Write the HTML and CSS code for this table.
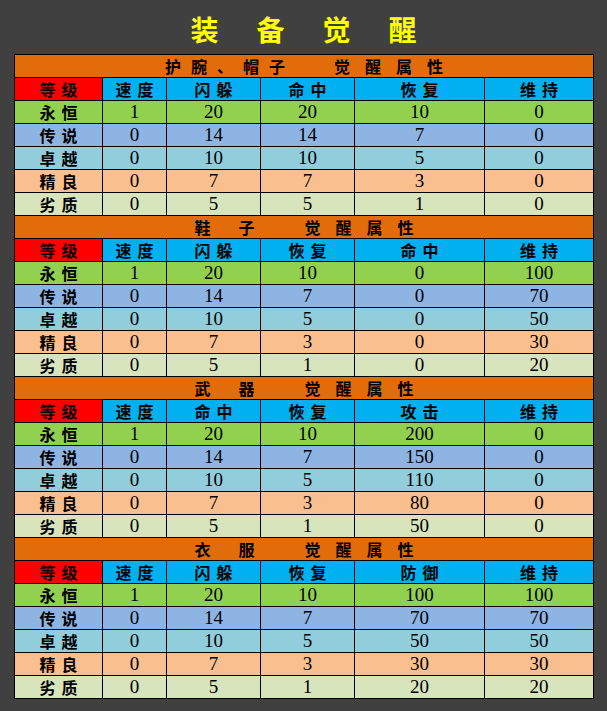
FILE: index.html
```html
<!DOCTYPE html>
<html lang="zh">
<head>
<meta charset="utf-8">
<title>装备觉醒</title>
<link rel="stylesheet" href="styles.css">
</head>
<body>
<h1 class="title">装备觉醒</h1>
<div class="grid">
  <div class="sec"><span class="p1 narrow">护腕、帽子</span><span class="p2 p2n">觉醒属性</span></div>
  <div class="c hd red cn">等级</div><div class="c hd blue cn">速度</div><div class="c hd blue cn">闪躲</div><div class="c hd blue cn">命中</div><div class="c hd blue cn">恢复</div><div class="c hd blue cn">维持</div>
  <div class="c r1 cn">永恒</div><div class="c r1">1</div><div class="c r1">20</div><div class="c r1">20</div><div class="c r1">10</div><div class="c r1">0</div>
  <div class="c r2 cn">传说</div><div class="c r2">0</div><div class="c r2">14</div><div class="c r2">14</div><div class="c r2">7</div><div class="c r2">0</div>
  <div class="c r3 cn">卓越</div><div class="c r3">0</div><div class="c r3">10</div><div class="c r3">10</div><div class="c r3">5</div><div class="c r3">0</div>
  <div class="c r4 cn">精良</div><div class="c r4">0</div><div class="c r4">7</div><div class="c r4">7</div><div class="c r4">3</div><div class="c r4">0</div>
  <div class="c r5 cn">劣质</div><div class="c r5">0</div><div class="c r5">5</div><div class="c r5">5</div><div class="c r5">1</div><div class="c r5">0</div>

  <div class="sec"><span class="p1 wide">鞋子</span><span class="p2">觉醒属性</span></div>
  <div class="c hd red cn">等级</div><div class="c hd blue cn">速度</div><div class="c hd blue cn">闪躲</div><div class="c hd blue cn">恢复</div><div class="c hd blue cn">命中</div><div class="c hd blue cn">维持</div>
  <div class="c r1 cn">永恒</div><div class="c r1">1</div><div class="c r1">20</div><div class="c r1">10</div><div class="c r1">0</div><div class="c r1">100</div>
  <div class="c r2 cn">传说</div><div class="c r2">0</div><div class="c r2">14</div><div class="c r2">7</div><div class="c r2">0</div><div class="c r2">70</div>
  <div class="c r3 cn">卓越</div><div class="c r3">0</div><div class="c r3">10</div><div class="c r3">5</div><div class="c r3">0</div><div class="c r3">50</div>
  <div class="c r4 cn">精良</div><div class="c r4">0</div><div class="c r4">7</div><div class="c r4">3</div><div class="c r4">0</div><div class="c r4">30</div>
  <div class="c r5 cn">劣质</div><div class="c r5">0</div><div class="c r5">5</div><div class="c r5">1</div><div class="c r5">0</div><div class="c r5">20</div>

  <div class="sec"><span class="p1 wide">武器</span><span class="p2">觉醒属性</span></div>
  <div class="c hd red cn">等级</div><div class="c hd blue cn">速度</div><div class="c hd blue cn">命中</div><div class="c hd blue cn">恢复</div><div class="c hd blue cn">攻击</div><div class="c hd blue cn">维持</div>
  <div class="c r1 cn">永恒</div><div class="c r1">1</div><div class="c r1">20</div><div class="c r1">10</div><div class="c r1">200</div><div class="c r1">0</div>
  <div class="c r2 cn">传说</div><div class="c r2">0</div><div class="c r2">14</div><div class="c r2">7</div><div class="c r2">150</div><div class="c r2">0</div>
  <div class="c r3 cn">卓越</div><div class="c r3">0</div><div class="c r3">10</div><div class="c r3">5</div><div class="c r3">110</div><div class="c r3">0</div>
  <div class="c r4 cn">精良</div><div class="c r4">0</div><div class="c r4">7</div><div class="c r4">3</div><div class="c r4">80</div><div class="c r4">0</div>
  <div class="c r5 cn">劣质</div><div class="c r5">0</div><div class="c r5">5</div><div class="c r5">1</div><div class="c r5">50</div><div class="c r5">0</div>

  <div class="sec"><span class="p1 wide">衣服</span><span class="p2">觉醒属性</span></div>
  <div class="c hd red cn">等级</div><div class="c hd blue cn">速度</div><div class="c hd blue cn">闪躲</div><div class="c hd blue cn">恢复</div><div class="c hd blue cn">防御</div><div class="c hd blue cn">维持</div>
  <div class="c r1 cn">永恒</div><div class="c r1">1</div><div class="c r1">20</div><div class="c r1">10</div><div class="c r1">100</div><div class="c r1">100</div>
  <div class="c r2 cn">传说</div><div class="c r2">0</div><div class="c r2">14</div><div class="c r2">7</div><div class="c r2">70</div><div class="c r2">70</div>
  <div class="c r3 cn">卓越</div><div class="c r3">0</div><div class="c r3">10</div><div class="c r3">5</div><div class="c r3">50</div><div class="c r3">50</div>
  <div class="c r4 cn">精良</div><div class="c r4">0</div><div class="c r4">7</div><div class="c r4">3</div><div class="c r4">30</div><div class="c r4">30</div>
  <div class="c r5 cn">劣质</div><div class="c r5">0</div><div class="c r5">5</div><div class="c r5">1</div><div class="c r5">20</div><div class="c r5">20</div>
</div>
</body>
</html>
```

FILE: styles.css
```css
html, body {
  margin: 0;
  padding: 0;
  background: #404040;
}
body {
  width: 607px;
  height: 711px;
  overflow: hidden;
}
.title {
  margin: 0;
  height: 54px;
  box-sizing: border-box;
  padding: 12px 0 0 38px;
  text-align: center;
  font-family: "Noto Sans CJK SC", sans-serif;
  font-size: 28px;
  font-weight: 700;
  line-height: 34px;
  letter-spacing: 38px;
  color: #ffff00;
}
.grid {
  margin-left: 14px;
  width: 580px;
  box-sizing: border-box;
  padding: 1px;
  background: #000;
  display: grid;
  grid-template-columns: 87px 63px 93px 93px 129px 108px;
  grid-auto-rows: 22px;
  gap: 1px;
}
.sec {
  grid-column: 1 / -1;
  background: #e26b0a;
  display: flex;
  justify-content: center;
  align-items: center;
  font-family: "Noto Sans CJK SC", sans-serif;
  font-size: 16px;
  font-weight: 700;
  color: #000;
  line-height: 22px;
}
.p1.narrow { letter-spacing: 10px; }
.p1.wide { letter-spacing: 28px; }
.p2 {
  letter-spacing: 15px;
  margin-left: 22px;
  margin-right: -15px;
}
.p2.p2n { margin-left: 39px; }
.c {
  text-align: center;
  line-height: 22px;
  font-family: "Liberation Serif", "Noto Sans CJK SC", serif;
  font-size: 19px;
  color: #000;
  overflow: hidden;
  white-space: nowrap;
}
.cn {
  font-family: "Noto Sans CJK SC", sans-serif;
  font-size: 16px;
  font-weight: 700;
  letter-spacing: 6px;
  padding-left: 6px;
}
.red { background: #ff0000; }
.blue { background: #00b0f0; }
.r1 { background: #92d050; }
.r2 { background: #8db4e2; }
.r3 { background: #92cddc; }
.r4 { background: #fabf8f; }
.r5 { background: #d8e4bc; }
```
